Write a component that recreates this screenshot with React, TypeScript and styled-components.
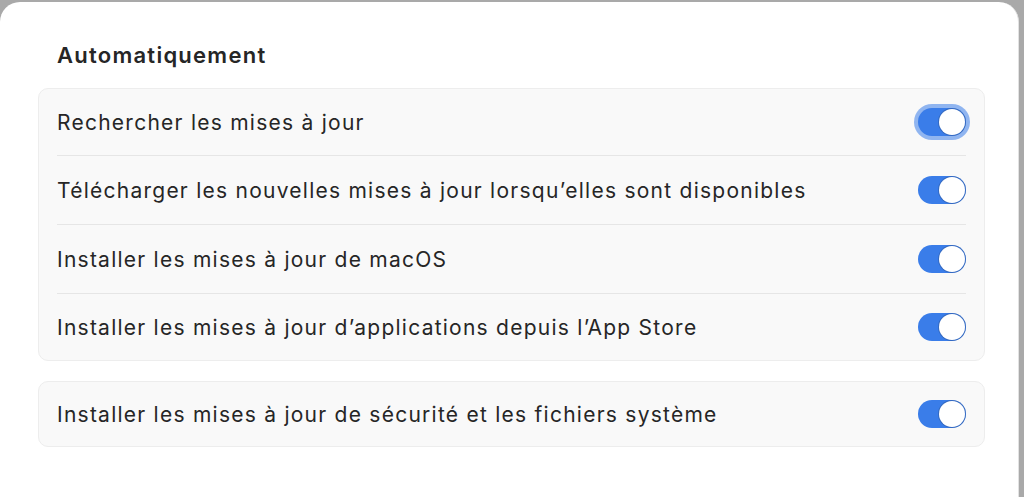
import React, { useState } from 'react';
import styled, { createGlobalStyle } from 'styled-components';

const GlobalStyle = createGlobalStyle`
  html, body {
    margin: 0;
    padding: 0;
    background: #a9a9a9;
    font-family: Inter, "Noto Sans", "Liberation Sans", sans-serif;
    -webkit-font-smoothing: antialiased;
  }
`;

const Screen = styled.div`
  width: 1024px;
  height: 497px;
  overflow: hidden;
  padding-top: 2px;
  box-sizing: border-box;
  display: flex;
`;

const Window = styled.div`
  width: 1019px;
  height: 495px;
  background: #ffffff;
  border-radius: 20px 20px 0 0;
  border-right: 1px solid #e2e2e2;
  box-sizing: border-box;
  padding: 39px 33px 0 38px;
`;

const SectionTitle = styled.h2`
  margin: 0 0 19px 19px;
  font-size: 22px;
  font-weight: 600;
  color: #262626;
  line-height: 28px;
  letter-spacing: 1.25px;
`;

const Group = styled.div`
  background: #f9f9f9;
  border: 1px solid #ededed;
  border-radius: 10px;
  padding: 0 18px;
  margin-bottom: 20px;
`;

const Row = styled.div<{ $last?: boolean; $height: number }>`
  display: flex;
  align-items: center;
  justify-content: space-between;
  height: ${p => p.$height}px;
  border-bottom: ${p => (p.$last ? 'none' : '1px solid #e6e6e6')};
`;

const Label = styled.span`
  font-size: 21px;
  color: #262626;
  letter-spacing: 1.25px;
`;

const Switch = styled.button<{ $on: boolean; $focus?: boolean }>`
  position: relative;
  width: 48px;
  height: 28px;
  border-radius: 14px;
  border: none;
  padding: 0;
  flex-shrink: 0;
  cursor: pointer;
  background: ${p => (p.$on ? '#3a7de9' : '#d8d8d8')};
  box-shadow: ${p => (p.$focus ? '0 0 0 4px rgba(58, 125, 233, 0.55)' : 'none')};

  &::after {
    content: '';
    position: absolute;
    top: 1px;
    left: ${p => (p.$on ? '21px' : '1px')};
    width: 26px;
    height: 26px;
    border-radius: 50%;
    background: #ffffff;
    box-shadow: 0 0 0 1px rgba(40, 70, 120, 0.35);
    box-sizing: border-box;
  }
`;

const groups = [
  {
    rowHeights: [66, 68, 68, 66],
    items: [
      'Rechercher les mises à jour',
      'Télécharger les nouvelles mises à jour lorsqu’elles sont disponibles',
      'Installer les mises à jour de macOS',
      'Installer les mises à jour d’applications depuis l’App Store',
    ],
  },
  {
    rowHeights: [64],
    items: ['Installer les mises à jour de sécurité et les fichiers système'],
  },
];

export default function App() {
  const [state, setState] = useState<Record<string, boolean>>({});

  return (
    <>
      <GlobalStyle />
      <Screen>
        <Window>
          <SectionTitle>Automatiquement</SectionTitle>
          {groups.map((group, gi) => (
            <Group key={gi}>
              {group.items.map((label, i) => (
                <Row key={label} $height={group.rowHeights[i]} $last={i === group.items.length - 1}>
                  <Label>{label}</Label>
                  <Switch
                    $on={state[label] !== false}
                    $focus={gi === 0 && i === 0}
                    onClick={() => setState(s => ({ ...s, [label]: s[label] === false }))}
                  />
                </Row>
              ))}
            </Group>
          ))}
        </Window>
      </Screen>
    </>
  );
}
